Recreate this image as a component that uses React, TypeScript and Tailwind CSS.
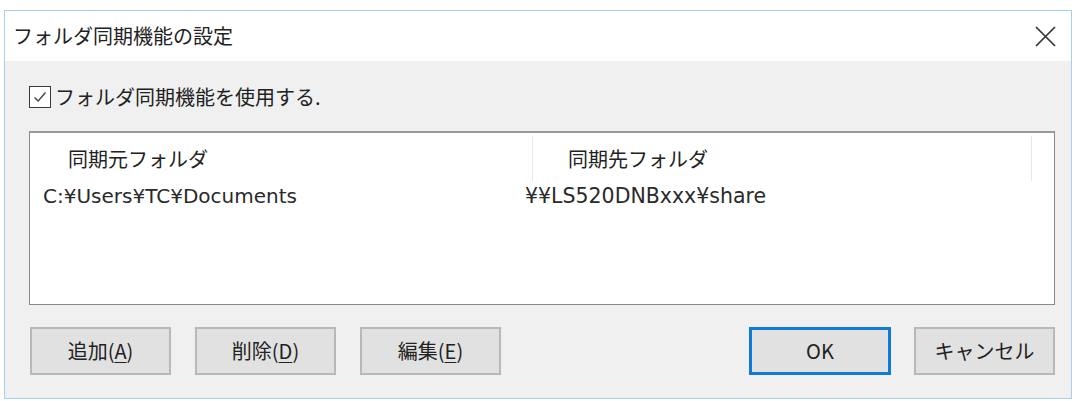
import React from 'react';

const jp = '"Noto Sans CJK JP", "Noto Sans", sans-serif';
const latin = '"DejaVu Sans", "Noto Sans CJK JP", sans-serif';

interface DlgButtonProps {
  label: string;
  hotkey?: string;
  primary?: boolean;
}

function DlgButton({ label, hotkey, primary = false }: DlgButtonProps) {
  return (
    <button
      className={
        primary
          ? 'w-[142px] h-[48px] flex items-center justify-center bg-[#e1e1e1] border-[3px] border-[#0f7bd6] text-[20px] text-[#222] leading-none'
          : 'w-[141px] h-[48px] flex items-center justify-center bg-[#e1e1e1] border-2 border-[#b8b8b8] text-[20px] text-[#222] leading-none'
      }
      style={{ fontFamily: jp }}
    >
      {label}
      {hotkey && (
        <>
          (<span className="underline underline-offset-[3px] decoration-1">{hotkey}</span>)
        </>
      )}
    </button>
  );
}

export default function App() {
  return (
    <div className="w-[1076px] h-[401px] bg-white overflow-hidden pt-[10px] pl-[4px]">
      <div className="w-[1068px] h-[389px] border border-[#a9cfee] flex flex-col">
        {/* Title bar */}
        <div className="h-[50px] bg-white flex items-center justify-between pl-[8px] pr-[15px]">
          <span className="text-[20px] text-[#222] leading-none" style={{ fontFamily: jp }}>
            フォルダ同期機能の設定
          </span>
          <svg width="21" height="21" viewBox="0 0 21 21" className="text-[#333]">
            <path d="M1 1 L20 20 M20 1 L1 20" stroke="currentColor" strokeWidth="1.7" fill="none" />
          </svg>
        </div>

        {/* Body */}
        <div className="flex-1 bg-[#f0f0f0] flex flex-col pl-[24px] pr-[16px]">
          {/* Checkbox */}
          <div className="flex items-center gap-[4px] mt-[25px] h-[22px]">
            <div className="w-[22px] h-[22px] bg-white border-[1.5px] border-[#3a3a3a] flex items-center justify-center">
              <svg width="16" height="14" viewBox="0 0 16 14">
                <path d="M2.5 7.5 L6.2 11 L13.5 2.5" stroke="#444" strokeWidth="1.4" fill="none" />
              </svg>
            </div>
            <span className="text-[20px] text-[#222] leading-none" style={{ fontFamily: jp }}>
              フォルダ同期機能を使用する.
            </span>
          </div>

          {/* List view */}
          <div className="mt-[23px] w-[1026px] h-[174px] bg-white border border-[#8a8a8a] border-t-2 border-t-[#9a9a9a] flex flex-col">
            <div className="h-[51px] flex items-stretch">
              <div className="w-[503px] flex items-center pl-[38px] border-r border-[#e8e8e8] my-[3px]">
                <span className="text-[20px] text-[#222] leading-none" style={{ fontFamily: jp }}>
                  同期元フォルダ
                </span>
              </div>
              <div className="w-[499px] flex items-center pl-[35px] border-r border-[#e8e8e8] my-[3px]">
                <span className="text-[20px] text-[#222] leading-none" style={{ fontFamily: jp }}>
                  同期先フォルダ
                </span>
              </div>
            </div>
            <div className="h-[24px] flex items-center text-[20px] text-[#2a2a2a] leading-none" style={{ fontFamily: latin }}>
              <div className="w-[495px] pl-[13px]">C:¥Users¥TC¥Documents</div>
              <div className="text-[20.5px]">¥¥LS520DNBxxx¥share</div>
            </div>
          </div>

          {/* Buttons */}
          <div className="mt-[22px] flex items-center justify-between pl-[1px]">
            <div className="flex gap-[24px]">
              <DlgButton label="追加" hotkey="A" />
              <DlgButton label="削除" hotkey="D" />
              <DlgButton label="編集" hotkey="E" />
            </div>
            <div className="flex gap-[23px]">
              <DlgButton label="OK" primary />
              <DlgButton label="キャンセル" />
            </div>
          </div>
        </div>
      </div>
    </div>
  );
}
